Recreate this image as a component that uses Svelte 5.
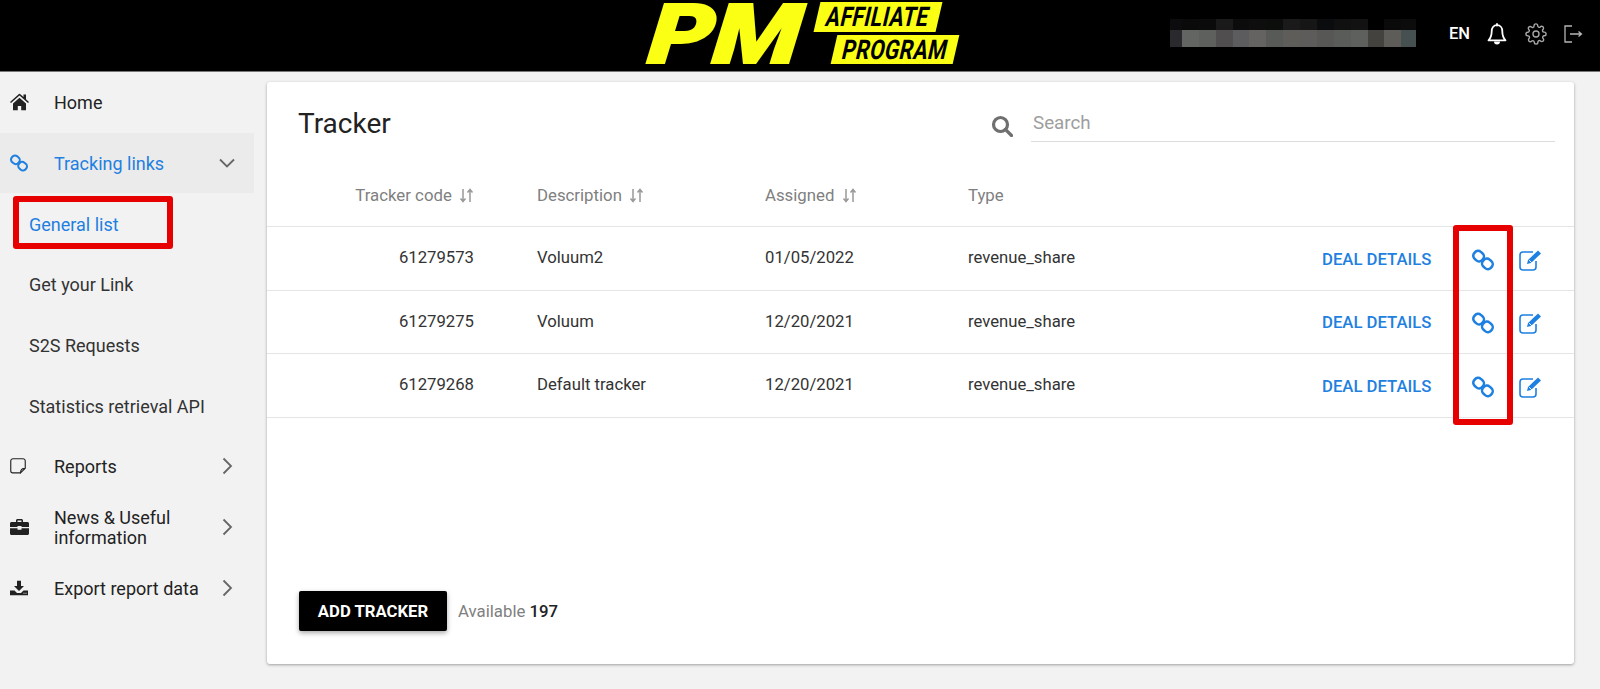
<script>
  const blur = [
    ['#0c0c0e','#2a2a2e',12],['#0a0a0a','#636562',17],['#0b0b0b','#5e605e',17],['#1a1a1a','#504e4e',17],
    ['#0c0c0c','#5c5c5e',16],['#0e0e0e','#656362',17],['#0c0e0c','#585a58',17],['#1a1a1a','#5e5d5a',17],
    ['#161616','#5e5c5a',17],['#0a0c0e','#575856',17],['#101010','#5a5c5a',17],['#121212','#5e605e',17],
    ['#000','#44423e',16],['#0a0a0a','#5e5c58',17],['#0c0c0c','#465050',15]
  ];
  const rows = [
    ['61279573','Voluum2','01/05/2022'],
    ['61279275','Voluum','12/20/2021'],
    ['61279268','Default tracker','12/20/2021']
  ];
</script>

{#snippet chain(size)}
  <svg width={size} height={size} viewBox="0 0 21 21" fill="none" stroke="currentColor" stroke-width="2.400">
    <rect x="1.300" y="2.300" width="10" height="9" rx="4" transform="rotate(40 6.300 6.800)"/>
    <rect x="9.700" y="9.700" width="10" height="9" rx="4" transform="rotate(40 14.700 14.200)"/>
  </svg>
{/snippet}

{#snippet chevronDown()}
  <svg class="chev" width="18" height="18" viewBox="0 0 18 18" fill="none" stroke="#666" stroke-width="1.800"><path d="M2 5.500l7 7 7-7"/></svg>
{/snippet}

{#snippet chevronRight()}
  <svg class="chev" width="18" height="18" viewBox="0 0 18 18" fill="none" stroke="#666" stroke-width="1.800"><path d="M5.500 1.500l7.500 7.500-7.500 7.500"/></svg>
{/snippet}

{#snippet sortIcon()}
  <svg class="sort" width="15" height="15" viewBox="0 0 15 15" fill="none" stroke="#999" stroke-width="1.500"><path d="M4 1v12M1.500 10.500L4 13.500l2.500-3M11 14V2M8.500 4.500L11 1.500l2.500 3"/></svg>
{/snippet}

<div class="page">
  <header class="top">
    <div class="logo">
      <span class="pm">PM</span>
      <div class="tags">
        <span class="tag t1"><span>AFFILIATE</span></span>
        <span class="tag t2"><span>PROGRAM</span></span>
      </div>
    </div>
    <div class="blur">
      {#each blur as b}
        <div class="blur-col" style="width:{b[2]}px">
          <i style="background:{b[0]}"></i><i class="low" style="background:{b[1]}"></i>
        </div>
      {/each}
    </div>
    <span class="lang">EN</span>
    <svg class="bell" width="20" height="23" viewBox="0 0 20 23" fill="none" stroke="#fff" stroke-width="1.800">
      <path d="M10 2.200c-3.600 0-5.300 2.700-5.300 6 0 4.600-1 6.700-3.200 9.100h17c-2.200-2.400-3.200-4.500-3.200-9.100 0-3.300-1.700-6-5.300-6z" stroke-linejoin="round"/>
      <path d="M10 1v1.500" stroke-linecap="round"/>
      <path d="M7 18.500a3 3 0 0 0 6 0z" fill="#fff" stroke="none"/>
    </svg>
    <svg class="gear" width="22" height="22" viewBox="0 0 24 24" fill="none" stroke="#a8a8a8" stroke-width="1.500">
      <circle cx="12" cy="12" r="3.300"/>
      <path d="M19.400 15a1.650 1.650 0 0 0 .33 1.820l.06.06a2 2 0 1 1-2.830 2.830l-.06-.06a1.650 1.650 0 0 0-2.800 1.170V21a2 2 0 1 1-4 0v-.09a1.650 1.650 0 0 0-2.800-1.170l-.06.06a2 2 0 1 1-2.830-2.830l.06-.06a1.650 1.650 0 0 0-1.170-2.800H3a2 2 0 1 1 0-4h.09a1.650 1.650 0 0 0 1.170-2.800l-.06-.06a2 2 0 1 1 2.830-2.830l.06.06a1.650 1.650 0 0 0 2.800-1.170V3a2 2 0 1 1 4 0v.09a1.650 1.650 0 0 0 2.800 1.170l.06-.06a2 2 0 1 1 2.830 2.830l-.06.06a1.650 1.650 0 0 0 1.170 2.800H21a2 2 0 1 1 0 4h-.09a1.650 1.650 0 0 0-1.510 1z"/>
    </svg>
    <svg class="out" width="20" height="20" viewBox="0 0 20 20" fill="none" stroke="#b5b5b5" stroke-width="1.300">
      <path d="M9 2H2v16h7M7 10h11.500M15.500 7.500l3 2.500-3 2.500"/>
    </svg>
  </header>

  <div class="body">
    <nav class="side">
      <a class="item">
        <svg class="ic" width="19" height="17" viewBox="0 0 19 17" fill="#222"><path d="M9.500 0L0 8.400l1 1.100L9.500 2l8.500 7.500 1-1.100-3-2.650V1h-2.500v2.550zM3 10v7h4.800v-4.500h3.400V17H16v-7L9.500 4.200z"/></svg>
        <span>Home</span>
      </a>
      <a class="item active">
        <span class="ic blue">{@render chain(18)}</span>
        <span>Tracking links</span>
        {@render chevronDown()}
      </a>
      <a class="sub current">General list<span class="mark"></span></a>
      <a class="sub">Get your Link</a>
      <a class="sub">S2S Requests</a>
      <a class="sub">Statistics retrieval API</a>
      <a class="item">
        <svg class="ic" width="16" height="16" viewBox="0 0 17 17" fill="none" stroke="#222" stroke-width="1.200"><path d="M11 15.800H3A2.300 2.300 0 0 1 .8 13.500V3A2.300 2.300 0 0 1 3 .8h11A2.300 2.300 0 0 1 16.200 3v8l-5 4.800c0-3 1-4.800 5-4.800"/></svg>
        <span>Reports</span>
        {@render chevronRight()}
      </a>
      <a class="item">
        <svg class="ic" width="19" height="16" viewBox="0 0 19 16" fill="#222"><path d="M6 3V1.500C6 .7 6.700 0 7.500 0h4c.8 0 1.500.7 1.500 1.500V3h4.500c.8 0 1.500.7 1.500 1.500V8H11.500V7h-4v1H0V4.500C0 3.700.7 3 1.500 3zm1.500 0h4V1.500h-4zM0 9.200h7.500v1.500h4V9.200H19v5.300c0 .8-.7 1.500-1.500 1.500h-16C.7 16 0 15.300 0 14.500z"/></svg>
        <span>News &amp; Useful<br>information</span>
        {@render chevronRight()}
      </a>
      <a class="item">
        <svg class="ic" width="18" height="15" viewBox="0 0 18 15" fill="#222"><path d="M7 0h4v5.500h3L9 10.500 4 5.500h3zM0 10h4.500L7 12.500h4L13.500 10H18v5H0zm13.500 2.200v1h1v-1zm2 0v1h1v-1z"/></svg>
        <span>Export report data</span>
        {@render chevronRight()}
      </a>
    </nav>

    <main class="card">
      <div class="head">
        <h1>Tracker</h1>
        <div class="search">
          <svg width="22" height="22" viewBox="0 0 22 22" fill="none" stroke="#6f6f6f" stroke-width="3.200"><circle cx="9.500" cy="9.500" r="7"/><path d="M14.500 14.500l6 6" stroke-linecap="round"/></svg>
          <span class="input">Search</span>
        </div>
      </div>

      <div class="tr th">
        <div class="code">Tracker code {@render sortIcon()}</div>
        <div>Description {@render sortIcon()}</div>
        <div>Assigned {@render sortIcon()}</div>
        <div>Type</div>
      </div>

      <div class="tbody">
        {#each rows as r}
          <div class="tr">
            <div class="code">{r[0]}</div>
            <div>{r[1]}</div>
            <div>{r[2]}</div>
            <div>revenue_share</div>
            <a class="deal">DEAL DETAILS</a>
            <span class="act">{@render chain(22)}</span>
            <svg class="edit" width="24" height="22" viewBox="0 0 24 22" fill="none" stroke="currentColor" stroke-width="1.600">
              <path d="M17 18v-6M14 3H4a3 3 0 0 0-3 3v12a3 3 0 0 0 3 3h10a3 3 0 0 0 3-3"/>
              <path d="M8 15l1-4L19 1.500l3 3L12 14z" fill="currentColor" stroke="none"/>
              <path d="M10.200 11.200l2.600 2.600" stroke="#fff" stroke-width="1"/>
            </svg>
          </div>
        {/each}
        <span class="mark tall"></span>
      </div>

      <div class="foot">
        <button>ADD TRACKER</button>
        <span class="avail">Available <b>197</b></span>
      </div>
    </main>
  </div>
</div>

<style>
  :global(body) { margin: 0; background: #f2f2f2; }
  .page { width: 1600px; height: 689px; overflow: hidden; font: 400 16px/20px Roboto, "Liberation Sans", sans-serif; color: #222; background: #f2f2f2; }

  .top { height: 71px; background: #000; border-bottom: 1px solid #777; display: flex; align-items: center; padding-left: 646px; box-sizing: content-box; }
  .logo { width: 314px; height: 64px; display: flex; align-items: center; gap: 8px; margin-top: -5px; }
  .pm { width: 162px; display: block; color: #faff14; font-size: 83px; line-height: 64px; font-weight: 900; -webkit-text-stroke: 2px #faff14; transform: skewX(-17deg) scaleX(1.2); transform-origin: 0 50%; margin-left: 4px; margin-top: 4px; white-space: nowrap; }
  .tags { display: flex; flex-direction: column; gap: 3px; margin-left: 0; }
  .tag { display: flex; align-items: center; justify-content: center; height: 30px; background: #faff14; transform: skewX(-13deg); color: #000; font-weight: 700; font-size: 27px; overflow: hidden; }
  .tag span { display: block; transform: scaleX(.78); letter-spacing: .5px; white-space: nowrap; }
  .t1 { width: 122px; margin-left: -3px; }
  .t2 { width: 122px; margin-left: 14px; height: 29px; }

  .blur { display: flex; margin-left: 210px; height: 28px; margin-top: -5px; }
  .blur-col { display: flex; flex-direction: column; }
  .blur-col i { display: block; height: 11px; }
  .blur-col i.low { height: 17px; }
  .lang { margin-left: 33px; color: #fff; font-weight: 500; font-size: 16.500px; margin-top: -3px; }
  .bell { margin-left: 17px; margin-top: -3px; }
  .gear { margin-left: 18px; margin-top: -3px; }
  .out { margin-left: 16px; margin-top: -3px; }

  .body { display: flex; align-items: flex-start; }
  .side { width: 254px; flex: none; display: flex; flex-direction: column; padding-top: 0; margin-right: 13px; }
  .item { height: 60.670px; display: flex; align-items: center; padding: 2px 0 0 54px; box-sizing: border-box; position: relative; color: #222; font-size: 18px; }
  .item.active { background: #ebebeb; color: #1e80e0; }
  .ic { position: absolute; left: 10px; top: 50%; transform: translateY(-50%); display: flex; }
  .blue { color: #1e80e0; }
  .chev { position: absolute; left: 218px; top: 50%; transform: translateY(-50%); }
  .sub { height: 60.670px; display: flex; align-items: center; padding: 2px 0 0 29px; box-sizing: border-box; position: relative; color: #333; font-size: 18px; }
  .sub.current { color: #1e80e0; }
  .mark { position: absolute; border: 6px solid #e60000; border-radius: 3px; box-sizing: border-box; pointer-events: none; }
  .current .mark { left: 13px; top: 3px; width: 160px; height: 53px; }

  .card { width: 1307px; height: 582px; margin-top: 10px; background: #fff; border-radius: 3px; box-shadow: 0 1px 3px rgba(0,0,0,.35); display: flex; flex-direction: column; }
  .head { height: 82px; display: flex; align-items: flex-start; padding: 0 19px 0 31px; box-sizing: border-box; }
  h1 { margin: 26px 0 0; font-size: 28px; line-height: 32px; font-weight: 400; color: #222; }
  .search { margin-left: auto; width: 564px; display: flex; align-items: center; gap: 18px; margin-top: 22px; }
  .search svg { margin-top: 5px; flex: none; }
  .input { flex: 1; height: 37px; line-height: 39px; padding-left: 2px; color: #9e9e9e; font-size: 18.800px; border-bottom: 1px solid #ddd; }

  .tr { display: grid; grid-template-columns: 270px 228px 203px 354px 150px 47px 46px; align-items: center; height: 63.500px; border-bottom: 1.500px solid #e5e5e5; box-sizing: border-box; font-size: 16.700px; color: #333; }
  .th { height: 63px; color: #808080; font-size: 16.800px; }
  .code { text-align: right; padding-right: 63px; }
  .th .code { padding-right: 63px; }
  .sort { vertical-align: -2px; margin-left: 3px; }
  .tbody { position: relative; }
  .deal { color: #1e80e0; font-size: 16.700px; font-weight: 500; margin-top: 3px; white-space: nowrap; }
  .act, .edit { color: #1e80e0; display: flex; margin-top: 3px; }
  .tall { left: 1186px; top: -2px; width: 60px; height: 200px; }

  .foot { margin-top: auto; padding: 0 0 33px 32px; display: flex; align-items: center; gap: 11px; }
  button { width: 148px; height: 40px; background: #000; color: #fff; border: 0; border-radius: 2px; font: 700 16.700px Roboto, sans-serif; box-shadow: 0 2px 5px rgba(0,0,0,.35); padding: 0; }
  .avail { color: #808080; font-size: 16.800px; }
  .avail b { color: #222; font-weight: 500; }
</style>
